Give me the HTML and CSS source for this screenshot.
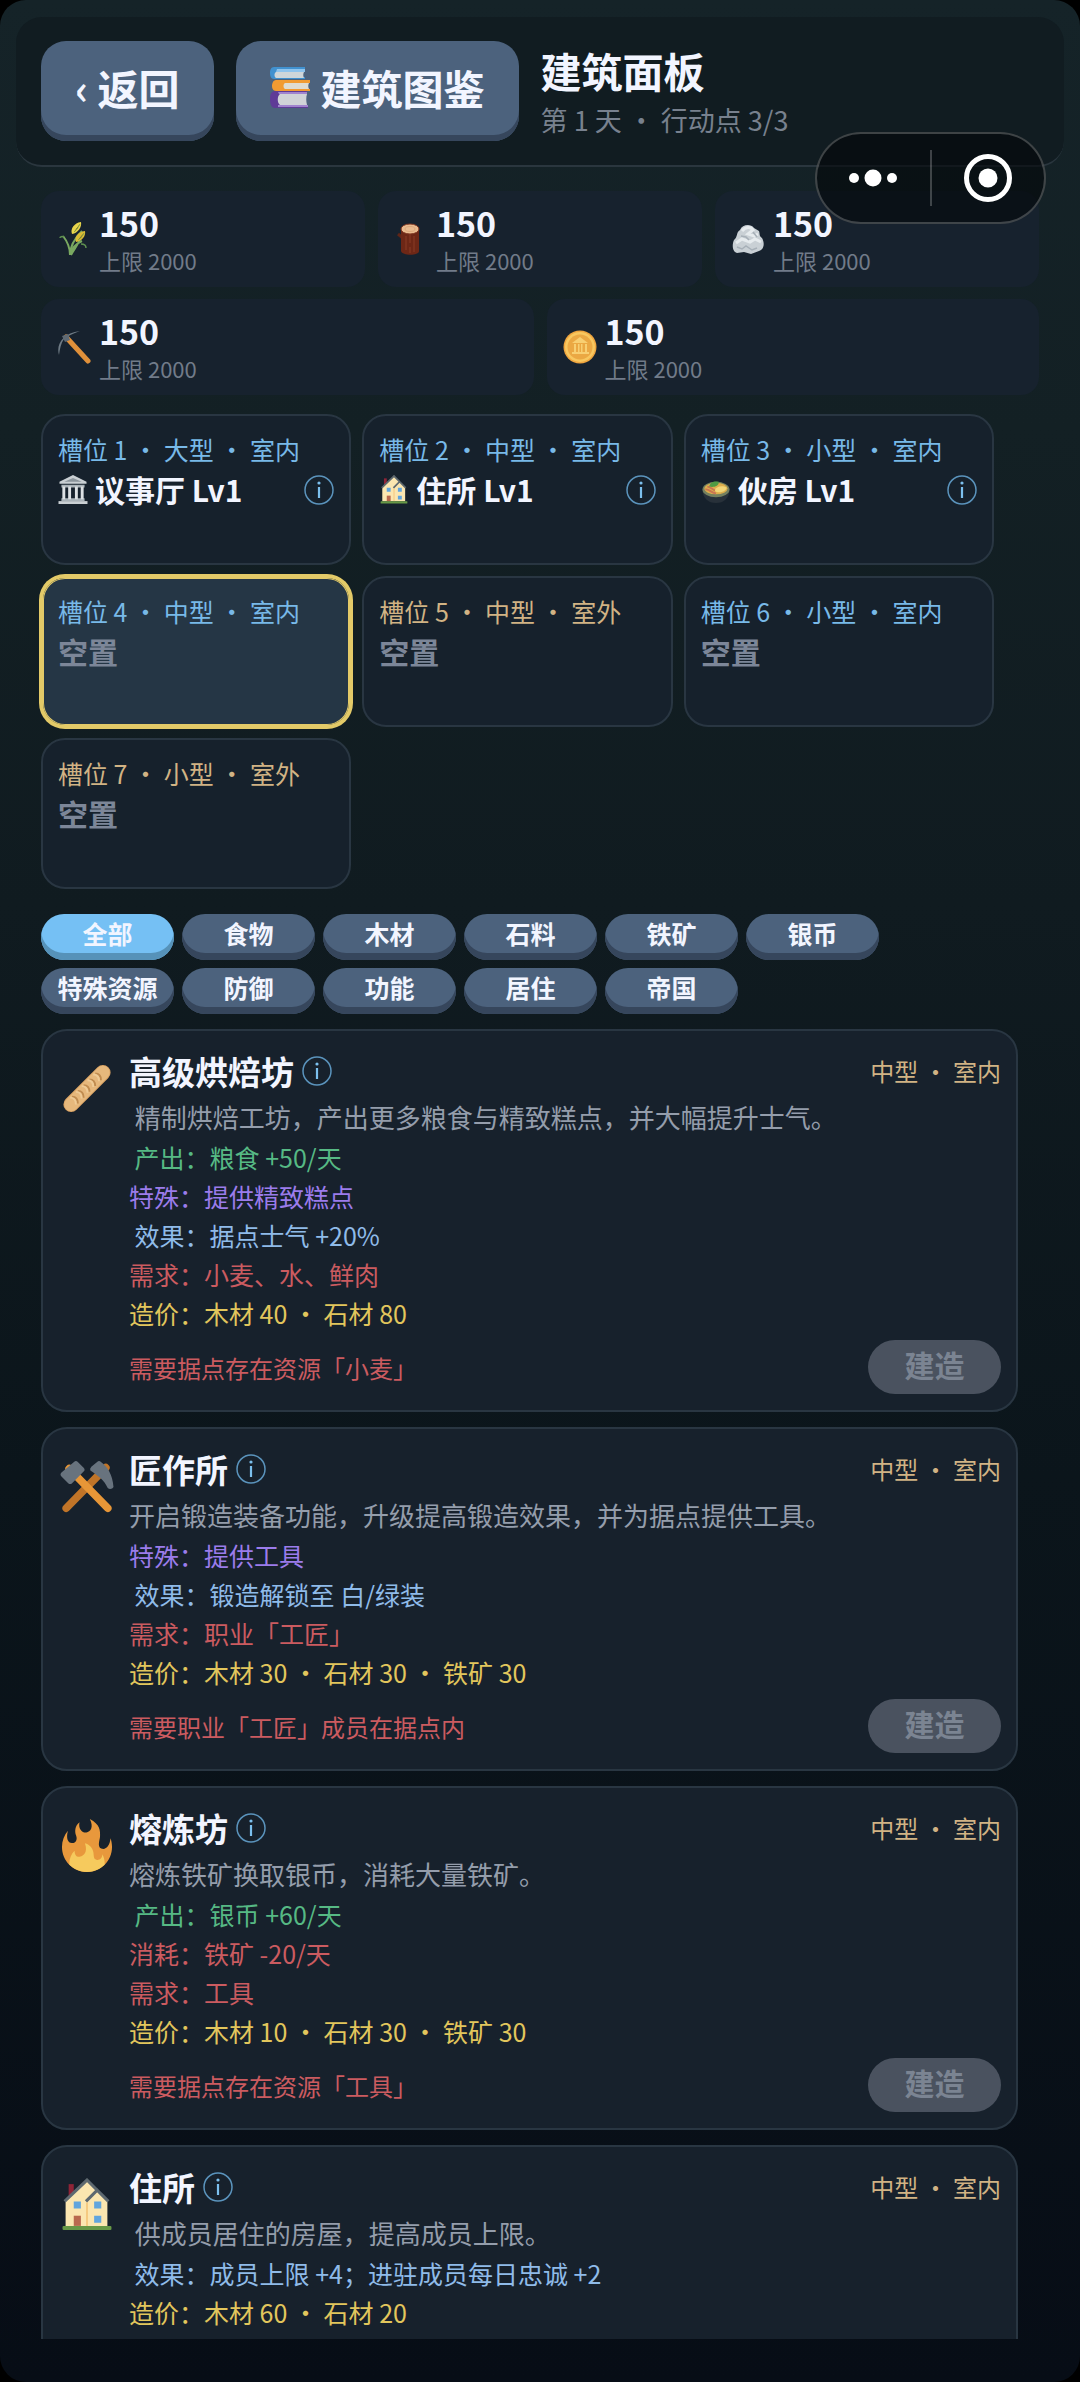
FILE: index.html
```html
<!DOCTYPE html>
<html lang="zh-CN">
<head>
    <meta charset="UTF-8">
    <meta name="viewport" content="width=device-width, initial-scale=1.0">
    <title>建筑面板</title>
    <link rel="stylesheet" href="styles.css">
</head>
<body>
    <!-- 共用图标 -->
    <svg class="sprite" aria-hidden="true">
        <symbol id="i-info" viewBox="0 0 30 30">
            <circle cx="15" cy="15" r="14" fill="none" stroke="#5b94bd" stroke-width="1.5"/>
            <circle cx="15" cy="8" r="1.6" fill="#7cc0ee"/>
            <path d="M15 12v11" stroke="#7cc0ee" stroke-width="2.2"/>
        </symbol>
        <symbol id="i-house" viewBox="0 0 48 52">
            <path d="M6 6h5v12H6z" fill="#8e2437"/>
            <path d="M3 22 24 1l11 12 9 9v25H3z" fill="#fbe6b0"/>
            <path d="M24 24v23" stroke="#f3c272" stroke-width="1.5"/>
            <path d="M2 23 24 2l10 10M23 23l11-11 11 11" fill="none" stroke="#5e6970" stroke-width="3"/>
            <path d="M11 23h7v7h-7zM31 23h7v7h-7zM31 37h7v7h-7z" fill="#61a5dd"/>
            <path d="M11 37h7v10h-7z" fill="#b9694e"/>
            <rect x="0" y="47" width="48" height="4" rx="1" fill="#679846"/>
        </symbol>
    </svg>

    <div class="screen">
        <header class="header">
            <button class="btn" type="button">‹ 返回</button>
            <button class="btn" type="button">
                <svg class="btn-icon" viewBox="0 0 40 41">
                    <path d="M4 0h31v3H7v7h28v2H4C1 12 0 9 0 6s1-6 4-6z" fill="#4191cf"/>
                    <path d="M7 2h28v3H6z" fill="#8fc4ed"/>
                    <path d="M6 5h28c-1 2-1 4 0 6H6c-2-1-2-5 0-6z" fill="#cfd6d9"/>
                    <path d="M6 13h34v3H16v6h24v2H6c-3 0-4-3-4-5s1-6 4-6z" fill="#f19b32"/>
                    <path d="M15 16h24c-1 2-1 4 0 6H15c-2-1-2-5 0-6z" fill="#dfdcd2"/>
                    <path d="M5 24h32v2H10v13h28v2H5c-4 0-5-5-5-9s1-8 5-8z" fill="#5f3b97"/>
                    <path d="M8 25h29v2H9zM8 38h30v2H8z" fill="#a184cf"/>
                    <path d="M10 27h27c-1 3-1 7 0 11H10c-3-2-3-9 0-11z" fill="#d0d3d8"/>
                </svg>
                <span>建筑图鉴</span>
            </button>
            <div class="heading">
                <h1>建筑面板</h1>
                <p>第 1 天 ・ 行动点 3/3</p>
            </div>
        </header>

        <!-- 小程序胶囊 -->
        <div class="capsule">
            <button class="capsule-btn" type="button" aria-label="更多">
                <svg width="50" height="50" viewBox="0 0 50 50" fill="#fff">
                    <circle cx="6" cy="25" r="5"/><circle cx="25" cy="25" r="8.5"/><circle cx="44" cy="25" r="5"/>
                </svg>
            </button>
            <button class="capsule-btn" type="button" aria-label="关闭">
                <svg width="50" height="50" viewBox="0 0 50 50">
                    <circle cx="25" cy="25" r="21.5" fill="none" stroke="#fff" stroke-width="5"/>
                    <circle cx="25" cy="25" r="9.5" fill="#fff"/>
                </svg>
            </button>
        </div>

        <section class="resources">
            <div class="res">
                <svg class="res-icon" viewBox="0 0 34 34">
                    <path d="M13 33C13 24 18 16 25 9M14 33c1-8 6-12 11-14M13 33c0-7-3-14-7-19M14 33c3-6 7-10 9-16" fill="none" stroke="#79a860" stroke-width="2"/>
                    <path d="M7 15c-2-1-4 0-4 1M24 22c4 0 5 2 5 4" fill="none" stroke="#5f9150" stroke-width="1.5"/>
                    <path d="M15 12c-2-5 2-11 9-12 1 5-3 11-9 12z" fill="#e8d44b"/>
                    <path d="M19 20c-2-5 2-10 9-11 1 5-3 10-9 11z" fill="#d9bb35"/>
                    <path d="M17 10c3-2 4-5 6-8M21 18c3-2 4-4 6-7" stroke="#8aa344" stroke-width="1"/>
                </svg>
                <div><b>150</b><span>上限 2000</span></div>
            </div>
            <div class="res">
                <svg class="res-icon" viewBox="0 0 34 34">
                    <path d="M10 17 4 12" stroke="#5f2517" stroke-width="3"/>
                    <path d="M7 7v22c1 5 18 5 18 0V7z" fill="#6d2716"/>
                    <path d="M12 14v14M16 12v9M20 14v16M16 25v6" stroke="#8a3d24" stroke-width="1"/>
                    <ellipse cx="16" cy="7" rx="9" ry="5" fill="#e9bb8f" stroke="#7d3520" stroke-width="1"/>
                    <ellipse cx="16" cy="7" rx="5" ry="2.5" fill="none" stroke="#dba77c" stroke-width="1"/>
                </svg>
                <div><b>150</b><span>上限 2000</span></div>
            </div>
            <div class="res">
                <svg class="res-icon" viewBox="0 0 34 34">
                    <path d="M9 8c2-5 10-7 14-2l5 3c1 3 0 5 3 7 3 5 2 12-3 13l-8 3-7-2-7 1c-5-1-5-9-3-13 4-3 2-8 6-10z" fill="#c9d0d5"/>
                    <path d="M11 9c4-5 9-4 11-1l-5 4 6 2 4-2M5 21l6-4 8 3 5-3 6 3" fill="none" stroke="#e6ebee" stroke-width="3"/>
                    <path d="m6 25 5 2 4-3 6 4 5-2M10 14l5 1 3 3M22 10l4 5" fill="none" stroke="#a7b0b8" stroke-width="1.5"/>
                </svg>
                <div><b>150</b><span>上限 2000</span></div>
            </div>
            <div class="res wide">
                <svg class="res-icon" viewBox="0 0 34 34">
                    <path d="M9 7 31 31" stroke="#e0903a" stroke-width="5" stroke-linecap="round"/>
                    <path d="M2 25C-1 15 5 3 23 1c-7 3-13 5-16 8-3 4-4 9-5 16z" fill="#6f7b85"/>
                    <path d="m5 6 6-2 2 6-5 2z" fill="#5f6a74"/>
                </svg>
                <div><b>150</b><span>上限 2000</span></div>
            </div>
            <div class="res wide">
                <svg class="res-icon" viewBox="0 0 34 34">
                    <circle cx="17" cy="17" r="16.5" fill="#f0a63f"/>
                    <circle cx="17" cy="17" r="15" fill="#f8c75f"/>
                    <circle cx="17" cy="17" r="12.5" fill="#eba843"/>
                    <path d="m9 13 8-6 8 6zM11 14h2v8h-2zM15 14h1.5v8H15zM18 14h1.5v8H18zM22 14h2v8h-2zM9 22h17v2H9z" fill="#f8cf72"/>
                </svg>
                <div><b>150</b><span>上限 2000</span></div>
            </div>
        </section>

        <section class="slots">
            <div class="slot">
                <div class="slot-meta">槽位 1 ・ 大型 ・ 室内</div>
                <div class="slot-name">
                    <svg class="slot-icon" viewBox="0 0 30 30">
                        <path d="M15 0 29 7v2H1V7z" fill="#c9cfd3"/>
                        <path d="M15 3 24 7H6z" fill="#8b959c"/>
                        <path d="M3 10h24v3H3zM3 24h24v3H3z" fill="#a9b2b8"/>
                        <path d="M4 12h3v13H4zM10 12h3v13h-3zM17 12h3v13h-3zM23 12h3v13h-3z" fill="#dde1e4"/>
                        <path d="M0 27h30v3H0z" fill="#c9cfd3"/>
                    </svg>
                    <b>议事厅 Lv1</b>
                    <button class="info" type="button" aria-label="说明"><svg><use href="#i-info"/></svg></button>
                </div>
            </div>
            <div class="slot">
                <div class="slot-meta">槽位 2 ・ 中型 ・ 室内</div>
                <div class="slot-name">
                    <svg class="slot-icon"><use href="#i-house"/></svg>
                    <b>住所 Lv1</b>
                    <button class="info" type="button" aria-label="说明"><svg><use href="#i-info"/></svg></button>
                </div>
            </div>
            <div class="slot">
                <div class="slot-meta">槽位 3 ・ 小型 ・ 室内</div>
                <div class="slot-name">
                    <svg class="slot-icon" viewBox="0 0 30 30">
                        <path d="M1 15c0 9 6 14 14 14s14-5 14-14z" fill="#28313a"/>
                        <ellipse cx="15" cy="15" rx="14" ry="8" fill="#74805f"/>
                        <ellipse cx="15" cy="14" rx="12" ry="6" fill="#dcae4c"/>
                        <path d="M13 16c2-4 8-6 13-3 0 4-8 7-13 3z" fill="#f2d677"/>
                        <path d="M4 15c4-1 6 4 11 4M6 12c3 0 5 3 8 4" fill="none" stroke="#ca7552" stroke-width="2"/>
                        <path d="M8 12c1-5 5-6 10-5 0 5-6 6-10 5z" fill="#4f9b43"/>
                    </svg>
                    <b>伙房 Lv1</b>
                    <button class="info" type="button" aria-label="说明"><svg><use href="#i-info"/></svg></button>
                </div>
            </div>
            <div class="slot selected">
                <div class="slot-meta">槽位 4 ・ 中型 ・ 室内</div>
                <div class="slot-name empty">空置</div>
            </div>
            <div class="slot">
                <div class="slot-meta outdoor">槽位 5 ・ 中型 ・ 室外</div>
                <div class="slot-name empty">空置</div>
            </div>
            <div class="slot">
                <div class="slot-meta">槽位 6 ・ 小型 ・ 室内</div>
                <div class="slot-name empty">空置</div>
            </div>
            <div class="slot">
                <div class="slot-meta outdoor">槽位 7 ・ 小型 ・ 室外</div>
                <div class="slot-name empty">空置</div>
            </div>
        </section>

        <nav class="filters">
            <button class="chip active" type="button">全部</button>
            <button class="chip" type="button">食物</button>
            <button class="chip" type="button">木材</button>
            <button class="chip" type="button">石料</button>
            <button class="chip" type="button">铁矿</button>
            <button class="chip" type="button">银币</button>
            <button class="chip" type="button">特殊资源</button>
            <button class="chip" type="button">防御</button>
            <button class="chip" type="button">功能</button>
            <button class="chip" type="button">居住</button>
            <button class="chip" type="button">帝国</button>
        </nav>

        <main class="list">
            <article class="card">
                <svg class="card-icon" viewBox="0 0 55 55">
                    <path d="M11 44 44 11" stroke="#d9a263" stroke-width="16" stroke-linecap="round"/>
                    <path d="M11 44 44 11" stroke="#e6b87c" stroke-width="14" stroke-linecap="round"/>
                    <path d="M12 36c4 0 6 3 6 7M18 30c4 0 6 3 6 7M24 24c4 0 6 3 6 7M30 18c4 0 6 3 6 7M36 12c4 0 6 3 6 7" fill="none" stroke="#c08c50" stroke-width="2"/>
                    <path d="M10 37c4 0 6 3 6 7M16 31c4 0 6 3 6 7M22 25c4 0 6 3 6 7M28 19c4 0 6 3 6 7M34 13c4 0 6 3 6 7" fill="none" stroke="#efcb96" stroke-width="2"/>
                </svg>
                <div class="card-body">
                    <div class="card-head">
                        <h2>高级烘焙坊</h2>
                        <button class="info" type="button" aria-label="说明"><svg><use href="#i-info"/></svg></button>
                        <span class="tag">中型 ・ 室内</span>
                    </div>
                    <p class="desc">&nbsp;精制烘焙工坊，产出更多粮食与精致糕点，并大幅提升士气。</p>
                    <p class="line output">&nbsp;产出：粮食 +50/天</p>
                    <p class="line special">特殊：提供精致糕点</p>
                    <p class="line effect">&nbsp;效果：据点士气 +20%</p>
                    <p class="line need">需求：小麦、水、鲜肉</p>
                    <p class="line cost">造价：木材 40 ・ 石材 80</p>
                    <div class="card-foot">
                        <span class="warn">需要据点存在资源「小麦」</span>
                        <button class="build" type="button" disabled>建造</button>
                    </div>
                </div>
            </article>

            <article class="card">
                <svg class="card-icon" viewBox="0 0 55 55">
                    <path d="M6 50 47 8" stroke="#c07428" stroke-width="8" stroke-linecap="round"/>
                    <path d="M49 50 9 9" stroke="#e79637" stroke-width="8" stroke-linecap="round"/>
                    <path d="M14 2q2-2 4 0l6 6q2 2 0 4L12 24q-2 2-4 0l-7-7q-2-2 0-4z" fill="#68737e"/>
                    <path d="M31 11q-1-2 1-4l6-5q2-2 4 0c7 5 12 13 13 26-1 2-4 3-6 1-4-8-8-11-18-18z" fill="#68737e"/>
                </svg>
                <div class="card-body">
                    <div class="card-head">
                        <h2>匠作所</h2>
                        <button class="info" type="button" aria-label="说明"><svg><use href="#i-info"/></svg></button>
                        <span class="tag">中型 ・ 室内</span>
                    </div>
                    <p class="desc">开启锻造装备功能，升级提高锻造效果，并为据点提供工具。</p>
                    <p class="line special">特殊：提供工具</p>
                    <p class="line effect">&nbsp;效果：锻造解锁至 白/绿装</p>
                    <p class="line need">需求：职业「工匠」</p>
                    <p class="line cost">造价：木材 30 ・ 石材 30 ・ 铁矿 30</p>
                    <div class="card-foot">
                        <span class="warn">需要职业「工匠」成员在据点内</span>
                        <button class="build" type="button" disabled>建造</button>
                    </div>
                </div>
            </article>

            <article class="card">
                <svg class="card-icon" viewBox="0 0 36 36">
                    <path fill="#e8983c" d="M35 19c0-2.062-.367-4.039-1.04-5.868-.46 5.389-3.333 8.157-6.335 6.868-2.812-1.208-.917-5.917-.777-8.164.236-3.809-.012-8.169-6.931-11.794 2.875 5.5.333 8.917-2.333 9.125-2.958.231-5.667-2.542-4.667-7.042-3.238 2.386-3.332 6.402-2.333 9 1.042 2.708-.042 4.958-2.583 5.208-2.84.28-4.418-3.041-2.963-8.333C2.52 10.965 1 14.805 1 19c0 9.389 7.611 17 17 17s17-7.611 17-17z"/>
                    <path fill="#f6ca5d" d="M28.394 23.999c.148 3.084-2.561 4.293-4.019 3.709-2.106-.843-1.541-2.291-2.083-5.291s-2.625-5.083-5.708-6c2.25 6.333-1.247 8.667-3.08 9.084-1.872.426-3.753-.001-3.968-4.007C7.352 23.668 6 26.676 6 30c0 .368.023.73.055 1.09C9.125 34.124 13.342 36 18 36s8.875-1.876 11.945-4.91c.032-.36.055-.722.055-1.09 0-2.187-.584-4.236-1.606-6.001z"/>
                </svg>
                <div class="card-body">
                    <div class="card-head">
                        <h2>熔炼坊</h2>
                        <button class="info" type="button" aria-label="说明"><svg><use href="#i-info"/></svg></button>
                        <span class="tag">中型 ・ 室内</span>
                    </div>
                    <p class="desc">熔炼铁矿换取银币，消耗大量铁矿。</p>
                    <p class="line output">&nbsp;产出：银币 +60/天</p>
                    <p class="line need">消耗：铁矿 -20/天</p>
                    <p class="line need">需求：工具</p>
                    <p class="line cost">造价：木材 10 ・ 石材 30 ・ 铁矿 30</p>
                    <div class="card-foot">
                        <span class="warn">需要据点存在资源「工具」</span>
                        <button class="build" type="button" disabled>建造</button>
                    </div>
                </div>
            </article>

            <article class="card">
                <svg class="card-icon"><use href="#i-house"/></svg>
                <div class="card-body">
                    <div class="card-head">
                        <h2>住所</h2>
                        <button class="info" type="button" aria-label="说明"><svg><use href="#i-info"/></svg></button>
                        <span class="tag">中型 ・ 室内</span>
                    </div>
                    <p class="desc">&nbsp;供成员居住的房屋，提高成员上限。</p>
                    <p class="line effect">&nbsp;效果：成员上限 +4；进驻成员每日忠诚 +2</p>
                    <p class="line cost">造价：木材 60 ・ 石材 20</p>
                    <div class="card-foot"></div>
                </div>
            </article>
        </main>
    </div>
</body>
</html>
```

FILE: styles.css
```css
* {
    box-sizing: border-box;
}
body {
    margin: 0;
    background: #000;
    color: #f2f5ff;
    font-family: "Noto Sans CJK SC", "Noto Sans", sans-serif;
}
h1, h2, p {
    margin: 0;
}
button {
    font-family: inherit;
    border: none;
    padding: 0;
    cursor: pointer;
}
svg {
    display: block;
    flex: none;
}
.sprite {
    position: absolute;
    width: 0;
    height: 0;
}
.screen {
    position: relative;
    display: flex;
    flex-direction: column;
    height: 100vh;
    padding: 17px 41px 43px;
    border-radius: 26px;
    background: linear-gradient(180deg, #152328 0%, #132024 18%, #101b20 38%, #0b151b 62%, #070d16 100%);
    overflow: hidden;
}

/* header */
.header {
    display: flex;
    gap: 22px;
    margin: 0 -25px 24px;
    padding: 24px 25px;
    border-bottom: 2px solid #2a363e;
    border-radius: 26px;
    background: #111c21;
}
.btn {
    display: flex;
    align-items: center;
    gap: 11px;
    height: 100px;
    padding: 0 34px 8px;
    border-radius: 25px;
    background: #4c627d;
    box-shadow: inset 0 -6px 0 #36465c;
    color: #f2f5ff;
    font-size: 41px;
    font-weight: bold;
    white-space: nowrap;
}
.btn-icon {
    width: 40px;
    height: 41px;
}
.heading h1 {
    font-size: 41px;
    line-height: 58px;
}
.heading p {
    color: #78818e;
    font-size: 27px;
    line-height: 42px;
}

.capsule {
    position: absolute;
    top: 132px;
    right: 34px;
    display: flex;
    width: 231px;
    height: 92px;
    padding: 16px 0;
    border: 2px solid rgba(255, 255, 255, 0.22);
    border-radius: 46px;
    background: rgba(4, 6, 10, 0.62);
}
.capsule-btn {
    flex: 1;
    display: flex;
    align-items: center;
    justify-content: center;
    background: none;
}
.capsule-btn + .capsule-btn {
    border-left: 2px solid rgba(255, 255, 255, 0.22);
}

/* resources */
.resources {
    display: grid;
    grid-template-columns: repeat(6, 1fr);
    gap: 12px 13px;
    margin-bottom: 19px;
}
.res {
    grid-column: span 2;
    display: flex;
    align-items: center;
    gap: 8px;
    height: 96px;
    padding: 0 16px;
    border-radius: 18px;
    background: #17222e;
}
.res.wide {
    grid-column: span 3;
}
.res-icon {
    width: 34px;
    height: 34px;
}
.res b, .res span {
    display: block;
}
.res b {
    font-size: 34px;
    line-height: 42px;
}
.res span {
    color: #717b89;
    font-size: 22px;
    line-height: 32px;
}

/* slots */
.slots {
    display: grid;
    grid-template-columns: repeat(3, 1fr);
    gap: 11px;
    margin: 0 45px 25px 0;
}
.slot {
    height: 151px;
    padding: 14px 15px;
    border: 2px solid #293642;
    border-radius: 24px;
    background: #16212c;
}
.slot.selected {
    border-color: #e3ca68;
    background: #253645;
    box-shadow: 0 0 0 2px #e3ca68, inset 0 0 0 1px #e3ca68;
}
.slot-meta {
    color: #78b9e8;
    font-size: 25px;
    line-height: 38px;
    white-space: nowrap;
}
.slot-meta.outdoor {
    color: #d1b384;
}
.slot-name {
    display: flex;
    align-items: center;
    gap: 7px;
    font-size: 30px;
    line-height: 43px;
    white-space: nowrap;
}
.slot-name.empty {
    color: #7c8698;
    font-weight: bold;
}
.slot-icon {
    width: 30px;
    height: 29px;
}
.info {
    width: 30px;
    height: 30px;
    background: none;
}
.info svg {
    width: 30px;
    height: 30px;
}
.slot .info {
    margin-left: auto;
}

/* filters */
.filters {
    display: flex;
    flex-wrap: wrap;
    gap: 8px;
    margin: 0 21px 15px 0;
}
.chip {
    width: 133px;
    height: 46px;
    padding-bottom: 8px;
    border-radius: 23px;
    background: #4c627d;
    box-shadow: inset 0 -7px 0 #36465c;
    color: #f2f5ff;
    font-size: 25px;
    font-weight: bold;
    line-height: 38px;
}
.chip.active {
    background: #75c0f4;
    box-shadow: inset 0 -7px 0 #5692b9;
}

/* building list */
.list {
    flex: 1;
    min-height: 0;
    margin-right: 21px;
    overflow: hidden;
}
.card {
    display: flex;
    gap: 14px;
    margin-bottom: 15px;
    padding: 14px 15px 16px;
    border: 2px solid #293642;
    border-radius: 26px;
    background: #17212c;
}
.card-icon {
    width: 56px;
    height: 53px;
    margin: 17px 0 0 1px;
}
.card-body {
    flex: 1;
}
.card-head {
    display: flex;
    align-items: center;
    gap: 8px;
    height: 51px;
}
.card-head h2 {
    font-size: 33px;
    line-height: 48px;
}
.tag {
    margin-left: auto;
    color: #d1b384;
    font-size: 24px;
}
.desc {
    color: #949dab;
    font-size: 26px;
    line-height: 42px;
}
.line {
    font-size: 25px;
    line-height: 39px;
}
.output {
    color: #56b984;
}
.special {
    color: #9b7ceb;
}
.effect {
    color: #8fbbe9;
}
.need, .warn {
    color: #cb5b60;
}
.cost {
    color: #e2c65c;
}
.card-foot {
    display: flex;
    align-items: center;
    justify-content: space-between;
    min-height: 54px;
    margin-top: 7px;
}
.warn {
    font-size: 24px;
}
.build {
    width: 133px;
    height: 54px;
    padding-bottom: 6px;
    border-radius: 27px;
    background: #4a525f;
    color: #7b8492;
    font-size: 30px;
    font-weight: bold;
    line-height: 48px;
}
```
